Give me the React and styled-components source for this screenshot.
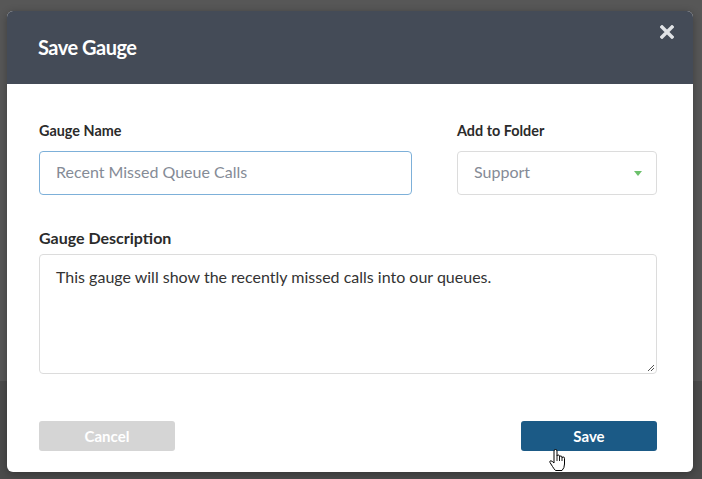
import React from "react";
import styled, { createGlobalStyle } from "styled-components";

const Global = createGlobalStyle`
  html, body { margin: 0; padding: 0; }
  body {
    width: 702px;
    height: 479px;
    overflow: hidden;
    font-family: Lato, "Open Sans", Arial, sans-serif;
    background: linear-gradient(to bottom, #575757 0, #575757 381px, #4b4b4b 381px);
  }
`;

const Backdrop = styled.div`
  padding: 11px 9px 7px 7px;
  box-sizing: border-box;
  height: 479px;
`;

const Modal = styled.div`
  position: relative;
  background: #fff;
  border-radius: 6px;
  overflow: hidden;
  height: 461px;
  display: flex;
  flex-direction: column;
  box-shadow: 0 2px 8px rgba(0, 0, 0, 0.3);
`;

const Header = styled.div`
  background: #444b57;
  height: 73px;
  display: flex;
  align-items: center;
  padding-left: 31px;
  padding-bottom: 2px;
  box-sizing: border-box;
`;

const Title = styled.h2`
  margin: 0;
  color: #fff;
  font-size: 20px;
  font-weight: 700;
  letter-spacing: -0.5px;
`;

const Close = styled.button`
  position: absolute;
  top: 12px;
  right: 17px;
  width: 18px;
  height: 18px;
  padding: 0;
  border: 0;
  background: none;
  display: flex;
  align-items: center;
  justify-content: center;
`;

const Body = styled.div`
  flex: 1;
  padding: 39px 36px 21px 32px;
  display: flex;
  flex-direction: column;
`;

const Row = styled.div`
  display: flex;
  gap: 45px;
`;

const Field = styled.div`
  display: flex;
  flex-direction: column;
  width: ${(p) => p.$w || "auto"};
  flex: ${(p) => (p.$grow ? 1 : "none")};
  margin-top: ${(p) => p.$mt || "0"};
`;

const Label = styled.label`
  font-weight: 700;
  color: #2b2b2b;
  line-height: 16px;
  font-size: ${(p) => p.$size || "14.4px"};
  margin-bottom: ${(p) => p.$mb || "12px"};
`;

const Input = styled.div`
  height: 44px;
  box-sizing: border-box;
  border: 1px solid ${(p) => (p.$focus ? "#7db0d9" : "#dcdcdc")};
  border-radius: 4px;
  display: flex;
  align-items: center;
  padding: 0 16px 3px;
  font-size: 16px;
  color: #858b96;
  position: relative;
`;

const Caret = styled.span`
  position: absolute;
  right: 14px;
  top: 19px;
  width: 0;
  height: 0;
  border-left: 4px solid transparent;
  border-right: 4px solid transparent;
  border-top: 5px solid #6cc06b;
`;

const TextArea = styled.div`
  height: 120px;
  box-sizing: border-box;
  border: 1px solid #dcdcdc;
  border-radius: 4px;
  padding: 12px 16px;
  font-size: 16px;
  color: #333;
  line-height: 20px;
  position: relative;
`;

const Grip = styled.svg`
  position: absolute;
  right: 1px;
  bottom: 1px;
`;

const Footer = styled.div`
  margin-top: auto;
  display: flex;
  justify-content: space-between;
  position: relative;
`;

const Button = styled.button`
  width: 136px;
  height: 30px;
  border: 0;
  border-radius: 3px;
  background: ${(p) => (p.$primary ? "#1b5a86" : "#d5d5d5")};
  color: #fff;
  font-family: inherit;
  font-size: 15px;
  font-weight: 700;
  padding: 0;
`;

const Cursor = styled.svg`
  position: absolute;
  left: 510px;
  top: 28px;
`;

export default function App() {
  return (
    <>
      <Global />
      <Backdrop>
        <Modal>
          <Header>
            <Title>Save Gauge</Title>
          </Header>
          <Close aria-label="Close">
            <svg width="14" height="14" viewBox="0 0 14 14">
              <path d="M2 2 L12 12 M12 2 L2 12" stroke="#e1e3e6" strokeWidth="3.4" strokeLinecap="square" />
            </svg>
          </Close>
          <Body>
            <Row>
              <Field $grow>
                <Label>Gauge Name</Label>
                <Input $focus>Recent Missed Queue Calls</Input>
              </Field>
              <Field $w="200px">
                <Label>Add to Folder</Label>
                <Input>
                  Support
                  <Caret />
                </Input>
              </Field>
            </Row>
            <Field $mt="35px">
              <Label $size="16px" $mb="8px">Gauge Description</Label>
              <TextArea>
                This gauge will show the recently missed calls into our queues.
                <Grip width="9" height="9" viewBox="0 0 9 9">
                  <path d="M8 2 L2 8 M8 5 L5 8" stroke="#555" strokeWidth="1" />
                </Grip>
              </TextArea>
            </Field>
            <Footer>
              <Button>Cancel</Button>
              <Button $primary>Save</Button>
              <Cursor width="18" height="23" viewBox="0 0 18 23">
                <path
                  d="M5 13 L5 2 Q5 0.5 6.5 0.5 Q8 0.5 8 2 L8 7 Q8 6 9.25 6 Q10.5 6 10.5 7.3 L10.5 8 Q10.5 7 11.75 7 Q13 7 13 8.3 L13 9 Q13 8 14.25 8 Q15.5 8 15.5 9.3 L15.5 15 Q15.5 19 13 21.5 L6.5 21.5 Q5 20 3.5 17.5 L1 13.5 Q0.3 12 1.8 11.8 Q3 11.8 5 14 Z"
                  fill="#fff"
                  stroke="#000"
                  strokeWidth="1"
                  strokeLinejoin="round"
                />
                <path d="M8 7 L8 12 M10.5 8 L10.5 12 M13 9 L13 12" stroke="#000" strokeWidth="0.9" />
              </Cursor>
            </Footer>
          </Body>
        </Modal>
      </Backdrop>
    </>
  );
}
